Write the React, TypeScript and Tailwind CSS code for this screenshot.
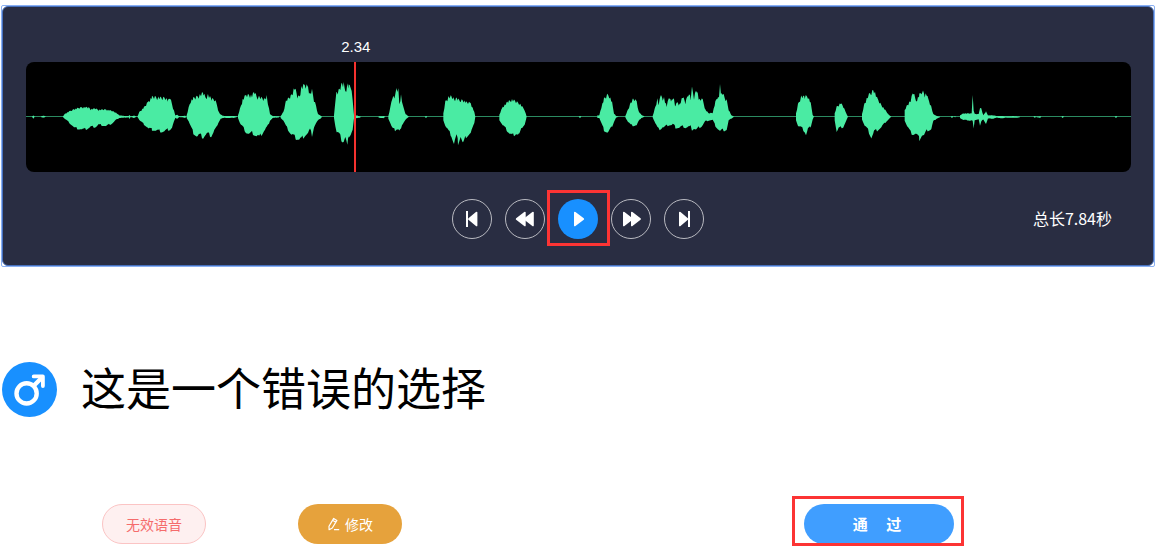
import type { ReactNode } from "react";

type Sample = [dx: number, up: number, down: number];
type Burst = { x: number; samples: Sample[] };

const VIEW_WIDTH = 3315;
const VIEW_HEIGHT = 330;
const AXIS = 164;

const bursts: Burst[] = [
  { x: 18, samples: [[0, 0, 0], [4, 4, 6], [8, 0, 0]] },
  { x: 46, samples: [[0, 2, 2], [8, 3, 3], [14, 0, 0]] },
  { x: 110, samples: [[0, 0, 0], [8, 10, 8], [28, 20, 26], [38, 24, 36], [55, 28, 38], [64, 29, 40], [78, 28, 35], [84, 23, 32], [98, 25, 32], [108, 21, 25], [130, 22, 29], [148, 18, 21], [160, 12, 10], [170, 4, 4], [186, 2, 3], [198, 2, 2], [200, 5, 7], [204, 1, 1], [214, 3, 4], [222, 0, 0]] },
  { x: 334, samples: [[0, 0, 0], [6, 14, 10], [20, 28, 24], [34, 48, 36], [44, 60, 40], [60, 60, 44], [75, 56, 46], [85, 60, 44], [92, 48, 40], [98, 60, 40], [104, 38, 34], [110, 18, 16], [114, 4, 4], [120, 6, 6], [126, 1, 1], [146, 3, 4]] },
  { x: 482, samples: [[0, 4, 4], [6, 28, 14], [12, 48, 30], [20, 56, 50], [30, 60, 60], [40, 66, 58], [50, 72, 64], [57, 58, 56], [64, 66, 54], [74, 54, 60], [84, 54, 42], [90, 42, 34], [94, 18, 20], [102, 6, 6], [112, 2, 4], [140, 2, 4], [152, 1, 1]] },
  { x: 636, samples: [[0, 4, 4], [6, 24, 20], [14, 52, 32], [24, 66, 48], [36, 66, 54], [42, 64, 50], [50, 76, 56], [56, 60, 60], [64, 60, 64], [78, 52, 44], [86, 64, 34], [90, 40, 28], [96, 8, 12], [104, 2, 4], [124, 1, 2]] },
  { x: 764, samples: [[0, 2, 4], [8, 14, 12], [16, 48, 30], [30, 62, 52], [42, 90, 64], [50, 62, 68], [56, 62, 70], [62, 90, 70], [72, 96, 58], [82, 92, 50], [88, 70, 40], [94, 80, 58], [100, 50, 32], [106, 34, 20], [112, 8, 12], [124, 0, 2]] },
  { x: 924, samples: [[0, 4, 4], [4, 50, 28], [8, 76, 48], [16, 82, 56], [24, 100, 74], [29, 100, 76], [34, 78, 62], [40, 98, 96], [44, 92, 60], [50, 98, 54], [56, 50, 40], [60, 6, 6], [70, 3, 4], [80, 0, 2]] },
  { x: 1058, samples: [[0, 1, 3], [14, 2, 5], [20, 0, 1]] },
  { x: 1087, samples: [[0, 2, 6], [6, 28, 20], [12, 62, 36], [20, 60, 42], [24, 86, 38], [30, 82, 38], [33, 38, 42], [38, 66, 40], [44, 32, 20], [52, 8, 8], [62, 0, 0]] },
  { x: 1196, samples: [[0, 0, 0], [4, 2, 4], [8, 0, 0]] },
  { x: 1252, samples: [[0, 10, 10], [6, 46, 28], [16, 60, 46], [24, 62, 58], [32, 54, 84], [40, 56, 60], [44, 52, 82], [52, 50, 60], [60, 50, 84], [68, 44, 62], [82, 42, 50], [90, 22, 30], [96, 4, 6]] },
  { x: 1420, samples: [[0, 6, 10], [10, 30, 26], [26, 46, 46], [38, 52, 60], [50, 46, 52], [60, 42, 56], [70, 28, 30], [76, 20, 24], [82, 0, 2]] },
  { x: 1658, samples: [[0, 0, 0], [4, 2, 4], [8, 0, 0]] },
  { x: 1714, samples: [[0, 4, 4], [6, 4, 4], [12, 30, 20], [20, 54, 42], [30, 66, 48], [36, 64, 44], [44, 44, 30], [50, 10, 16], [56, 2, 3], [64, 0, 0]] },
  { x: 1798, samples: [[0, 2, 2], [8, 22, 16], [16, 42, 26], [24, 54, 28], [34, 48, 26], [40, 16, 14], [48, 6, 4], [58, 0, 0]] },
  { x: 1880, samples: [[0, 2, 2], [8, 30, 20], [14, 54, 34], [18, 38, 40], [26, 72, 36], [30, 46, 32], [34, 60, 32], [42, 32, 28], [50, 62, 26], [55, 44, 26], [60, 60, 24], [64, 52, 26], [68, 30, 34], [74, 50, 34], [78, 32, 34], [90, 62, 30], [98, 42, 34], [104, 62, 32], [109, 78, 32], [114, 54, 30], [118, 86, 40], [124, 58, 36], [132, 86, 40], [138, 56, 34], [143, 48, 32], [147, 62, 30], [158, 22, 14], [168, 10, 12], [180, 12, 10], [188, 44, 28], [196, 66, 38], [199, 56, 40], [202, 100, 44], [206, 70, 44], [210, 74, 42], [216, 56, 42], [222, 50, 40], [228, 22, 12], [236, 4, 6], [244, 0, 0]] },
  { x: 2310, samples: [[0, 10, 10], [6, 38, 28], [16, 62, 34], [26, 60, 46], [30, 62, 56], [36, 62, 38], [44, 42, 32], [50, 6, 8], [54, 0, 0]] },
  { x: 2426, samples: [[0, 10, 10], [6, 30, 46], [12, 36, 36], [18, 42, 34], [26, 30, 32], [34, 12, 14], [40, 0, 0]] },
  { x: 2508, samples: [[0, 8, 8], [8, 42, 28], [18, 64, 42], [28, 74, 64], [36, 82, 46], [46, 54, 42], [58, 36, 32], [70, 20, 18], [80, 6, 8], [88, 0, 0]] },
  { x: 2636, samples: [[0, 20, 12], [8, 36, 30], [18, 50, 50], [26, 76, 54], [34, 48, 52], [44, 66, 70], [52, 80, 56], [60, 68, 56], [66, 70, 44], [70, 54, 42], [80, 30, 38], [86, 8, 14], [96, 2, 6], [106, 0, 2]] },
  { x: 2774, samples: [[0, 0, 0], [4, 2, 4], [8, 0, 0], [16, 1, 3]] },
  { x: 2802, samples: [[0, 4, 4], [10, 10, 10], [32, 10, 12], [35, 12, 12], [38, 64, 14], [41, 20, 42], [44, 8, 10], [56, 8, 8], [60, 30, 30], [64, 24, 16], [70, 4, 8], [78, 16, 22], [84, 4, 6], [100, 4, 6], [110, 2, 3], [126, 2, 5], [140, 1, 3], [160, 2, 4], [180, 0, 2]] },
  { x: 3022, samples: [[0, 0, 0], [4, 2, 3], [8, 0, 1], [20, 1, 4], [24, 0, 0]] },
  { x: 3106, samples: [[0, 0, 0], [4, 2, 4], [8, 0, 0]] },
  { x: 3266, samples: [[0, 0, 0], [4, 2, 4], [8, 0, 0]] },
];

// Scales neighbouring columns differently so that the outline shows short peaks.
const ripple = [1, 0.88, 1.04, 0.98, 0.85, 1.02, 0.9, 1.05];

function burstPath({ x, samples }: Burst) {
  const upper: string[] = [];
  const lower: string[] = [];
  for (let i = 1; i < samples.length; i++) {
    const [x0, u0, d0] = samples[i - 1];
    const [x1, u1, d1] = samples[i];
    for (let dx = x0; dx < x1; dx += 3) {
      const t = (dx - x0) / (x1 - x0);
      const n = Math.round(dx / 3);
      const up = (u0 + (u1 - u0) * t) * ripple[n % 8];
      const down = (d0 + (d1 - d0) * t) * ripple[(n * 3 + 2) % 8];
      upper.push(`${x + dx},${(AXIS - up).toFixed(1)}`);
      lower.unshift(`${x + dx},${(AXIS + down).toFixed(1)}`);
    }
  }
  const end = x + samples[samples.length - 1][0];
  return `M${upper.join("L")}L${end},${AXIS}L${lower.join("L")}Z`;
}

function Waveform() {
  return (
    <svg
      className="block h-full w-full"
      viewBox={`0 0 ${VIEW_WIDTH} ${VIEW_HEIGHT}`}
      preserveAspectRatio="none"
      aria-hidden="true"
    >
      <rect x="0" y="162" width={VIEW_WIDTH} height="3" fill="#2b8a60" />
      {bursts.map((burst) => (
        <path key={burst.x} d={burstPath(burst)} fill="#4aeba3" />
      ))}
    </svg>
  );
}

function Glyph({ children }: { children: ReactNode }) {
  return (
    <svg
      className="h-5 w-5"
      viewBox="0 0 20 20"
      fill="currentColor"
      stroke="currentColor"
      strokeWidth="1.8"
      strokeLinejoin="round"
      aria-hidden="true"
    >
      {children}
    </svg>
  );
}

function RoundButton({ label, children }: { label: string; children: ReactNode }) {
  return (
    <button
      type="button"
      aria-label={label}
      className="flex h-10 w-10 items-center justify-center rounded-full border border-[#b9bac1] text-white"
    >
      <Glyph>{children}</Glyph>
    </button>
  );
}

function Player() {
  return (
    <section className="rounded-xs border border-[#8ab0f3] bg-white">
      <div className="rounded-md border border-[#4670bd] bg-[#292d42] pt-[29px] pr-[22px] pb-[26px] pl-[23px]">
        <div className="relative pt-[26px]">
          <div className="h-[110px] overflow-hidden rounded-lg bg-black">
            <Waveform />
          </div>
          <div className="absolute inset-y-0 left-[29.8%] flex w-0 flex-col items-center">
            <span className="h-[26px] shrink-0 pl-px font-['Liberation_Sans',sans-serif] text-[15px] leading-[22px] text-white">
              2.34
            </span>
            <span className="w-[2px] grow bg-[#f5322f]" />
          </div>
        </div>
        <div className="mt-[27px] grid grid-cols-[1fr_auto_1fr] items-center pr-[2px]">
          <div className="col-start-2 flex gap-[13px]">
            <RoundButton label="跳到开头">
              <path d="M5 2v16" fill="none" strokeWidth="2" />
              <path d="M14.5 3.6v12.8L7 10z" />
            </RoundButton>
            <RoundButton label="快退">
              <path d="M9.8 3.6v12.8L1.7 10z" />
              <path d="M17.9 3.6v12.8L9.8 10z" />
            </RoundButton>
            <div className="relative">
              <button
                type="button"
                aria-label="播放"
                className="flex h-10 w-10 items-center justify-center rounded-full bg-[#1890ff] text-white"
              >
                <Glyph>
                  <path d="M6.9 3.6v12.8l8.3-6.4z" />
                </Glyph>
              </button>
              <span className="pointer-events-none absolute -top-[9px] -right-3 -bottom-[7px] -left-[11px] border-3 border-[#fc3434]" />
            </div>
            <RoundButton label="快进">
              <path d="M2.9 3.6v12.8l8.1-6.4z" />
              <path d="M10.9 3.6v12.8l8.1-6.4z" />
            </RoundButton>
            <RoundButton label="跳到结尾">
              <path d="M5.9 3.6v12.8l7.4-6.4z" />
              <path d="M15 2v16" fill="none" strokeWidth="2" />
            </RoundButton>
          </div>
          <p className="justify-self-end pr-[17px] pb-[2px] text-base text-white">总长7.84秒</p>
        </div>
      </div>
    </section>
  );
}

function MaleIcon() {
  return (
    <svg className="h-[55px] w-[55px] shrink-0" viewBox="0 0 55 55" role="img" aria-label="男">
      <circle cx="27.5" cy="27.5" r="27.5" fill="#1890ff" />
      <g fill="none" stroke="#fff" strokeWidth="4.4">
        <circle cx="24.6" cy="31.4" r="10.1" />
        <path d="M31.5 24l9-9" />
        <path d="M31.7 14.4h9.2V24" strokeWidth="3.8" strokeLinecap="round" strokeLinejoin="round" />
      </g>
    </svg>
  );
}

function PencilIcon() {
  return (
    <svg
      className="h-[14px] w-[14px]"
      viewBox="0 0 14 14"
      fill="none"
      stroke="currentColor"
      strokeWidth="1.2"
      strokeLinejoin="round"
      aria-hidden="true"
    >
      <path d="M2 9.2L6.7 1.4l3.2 2L5.3 11l-3.2 1.7zM5.6 3.3l3.2 2M7 12.7h5.2" />
    </svg>
  );
}

export default function App() {
  return (
    <main className="bg-white pt-[5px] font-['Noto_Sans_CJK_SC',sans-serif]">
      <div className="px-px">
        <Player />
      </div>
      <div className="mt-[95px] flex items-center gap-6 px-[2px]">
        <MaleIcon />
        <h1 className="pb-[6px] text-[45px] leading-[49px] font-normal text-black">这是一个错误的选择</h1>
      </div>
      <div className="mt-[87px] flex items-center pr-[202px] pb-[2px] pl-[102px] text-sm">
        <button
          type="button"
          className="h-10 w-[104px] rounded-full border border-[#fbc4c4] bg-[#fef0f0] font-normal text-[#f56c6c]"
        >
          无效语音
        </button>
        <button
          type="button"
          className="ml-[92px] flex h-10 w-[104px] items-center justify-center gap-1 rounded-full bg-[#e6a23c] text-white"
        >
          <PencilIcon />
          修改
        </button>
        <div className="relative ml-auto">
          <button
            type="button"
            className="block h-10 w-[150px] rounded-full bg-[#409eff] pr-1 text-[15px] font-bold whitespace-pre text-white"
          >
            {"通\u2003\u00a0过"}
          </button>
          <span className="pointer-events-none absolute -top-2 -right-[10px] -bottom-[2px] -left-3 border-3 border-[#fc3434]" />
        </div>
      </div>
    </main>
  );
}
